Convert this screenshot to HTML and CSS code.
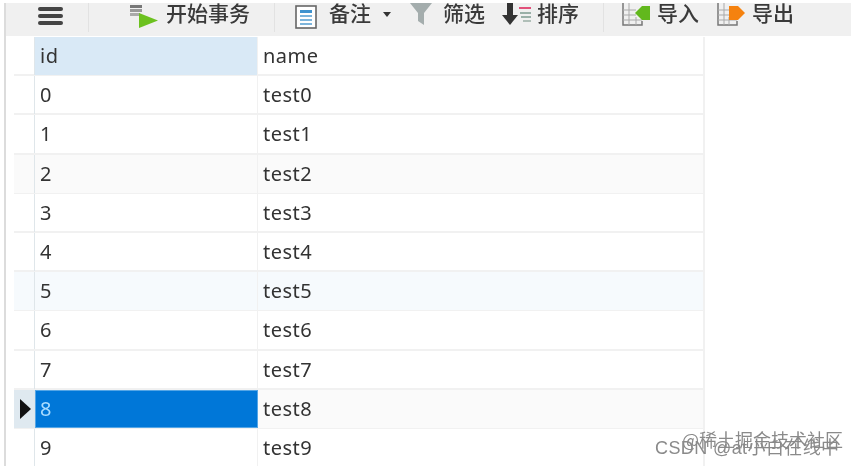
FILE: index.html
```html
<!DOCTYPE html>
<html lang="zh">
<head>
<meta charset="utf-8">
<title>Table</title>
<link rel="stylesheet" href="styles.css">
</head>
<body>
<div class="app">
  <div class="frame">
    <div class="toolbar">
      <div class="menu"><span></span><span></span><span></span></div>
      <div class="sep sep-a"></div>
      <div class="tool t-begin">
        <svg width="28" height="23" viewBox="0 0 28 23"><rect x="0" y="0" width="12" height="3" fill="#777"/><rect x="0" y="4" width="12" height="3" fill="#999"/><rect x="0" y="8" width="10" height="3" fill="#aaa"/><path d="M9 8 L28 15.500 L9 23 Z" fill="#6cc11f"/></svg>
        <span>开始事务</span>
      </div>
      <div class="sep sep-b"></div>
      <div class="tool t-note">
        <svg class="ic-note" width="22" height="24" viewBox="0 0 22 24"><rect x="1" y="1" width="20" height="22" fill="#fff" stroke="#666" stroke-width="1.600"/><rect x="5" y="5" width="12" height="3" fill="#3f93cf"/><rect x="5" y="10" width="12" height="2" fill="#7db5dc"/><rect x="5" y="14" width="12" height="2" fill="#7db5dc"/><rect x="5" y="18" width="12" height="2" fill="#7db5dc"/></svg>
        <span>备注</span>
        <i class="caret"></i>
      </div>
      <div class="tool t-filter">
        <svg width="22" height="22" viewBox="0 0 22 22"><path d="M0 0 H22 L14 10 V22 L8 18 V10 Z" fill="#a4adad"/></svg>
        <span>筛选</span>
      </div>
      <div class="tool t-sort">
        <svg width="30" height="22" viewBox="0 0 30 22"><rect x="5" y="0" width="6" height="14" fill="#333"/><path d="M0 12 H16 L8 22 Z" fill="#333"/><rect x="17" y="4" width="12" height="2" fill="#e2517b"/><rect x="18" y="9" width="11" height="2" fill="#9ab0a8"/><rect x="19" y="13" width="10" height="2" fill="#9ab0a8"/><rect x="21" y="17" width="8" height="2" fill="#b0bfb8"/></svg>
        <span>排序</span>
      </div>
      <div class="sep sep-c"></div>
      <div class="tool t-import">
        <svg width="28" height="23" viewBox="0 0 28 23"><path d="M1 0 V22 H20 V18" fill="none" stroke="#777" stroke-width="1.500"/><path d="M1 7 H14 M1 12 H14 M1 17 H20 M7 0 V22 M14 14 V22" stroke="#aaa" stroke-width="1"/><path d="M13 10 L20 3 H28 V17 H20 Z" fill="#62b81d"/></svg>
        <span>导入</span>
      </div>
      <div class="tool t-export">
        <svg width="28" height="23" viewBox="0 0 28 23"><path d="M1 0 V22 H20 V18" fill="none" stroke="#777" stroke-width="1.500"/><path d="M1 7 H12 M1 12 H12 M1 17 H20 M7 0 V22 M12 14 V22" stroke="#aaa" stroke-width="1"/><path d="M28 10 L21 3 H12 V17 H21 Z" fill="#f5820f"/></svg>
        <span>导出</span>
      </div>
    </div>
    <div class="grid">
      <div class="row head"><div class="gut"></div><div class="cell id sel-col">id</div><div class="cell">name</div></div>
      <div class="row"><div class="gut"></div><div class="cell id">0</div><div class="cell">test0</div></div>
      <div class="row"><div class="gut"></div><div class="cell id">1</div><div class="cell">test1</div></div>
      <div class="row alt"><div class="gut"></div><div class="cell id">2</div><div class="cell">test2</div></div>
      <div class="row"><div class="gut"></div><div class="cell id">3</div><div class="cell">test3</div></div>
      <div class="row"><div class="gut"></div><div class="cell id">4</div><div class="cell">test4</div></div>
      <div class="row tint"><div class="gut"></div><div class="cell id">5</div><div class="cell">test5</div></div>
      <div class="row"><div class="gut"></div><div class="cell id">6</div><div class="cell">test6</div></div>
      <div class="row"><div class="gut"></div><div class="cell id">7</div><div class="cell">test7</div></div>
      <div class="row alt current"><div class="gut"><i class="pointer"></i></div><div class="cell id selected">8</div><div class="cell">test8</div></div>
      <div class="row"><div class="gut"></div><div class="cell id">9</div><div class="cell">test9</div></div>
    </div>
  </div>
  <div class="mark mark-a">@稀土掘金技术社区</div>
  <div class="mark mark-b">CSDN @at小白在线中</div>
</div>
</body>
</html>
```
FILE: styles.css
```css
* { box-sizing: border-box; }
html, body { margin: 0; height: 100%; background: #fff; overflow: hidden; }
.app {
  position: relative;
  width: 857px;
  height: 466px;
  padding: 3px 6px 0 4px;
  overflow: hidden;
  font-family: "Noto Sans CJK SC", "Noto Sans", sans-serif;
  color: #333;
  filter: blur(0.6px);
}
.frame { height: 463px; border-left: 2px solid #dcdcdc; }
.toolbar {
  height: 33px;
  background: #f0f0f0;
  display: flex;
  align-items: flex-start;
  font-family: "Liberation Sans", "Noto Sans CJK SC", sans-serif;
  font-size: 21px;
  line-height: 22px;
  font-weight: 500;
  color: #3a3a3a;
}
.menu { display: flex; flex-direction: column; gap: 3px; width: 25px; margin: 4px 0 0 32px; }
.menu span { display: block; height: 4px; border-radius: 2px; background: #444; }
.sep { width: 1px; height: 29px; background: #e2e2e2; }
.sep-a { margin-left: 25px; }
.tool { display: flex; align-items: flex-start; white-space: nowrap; }
.t-begin { margin-left: 41px; gap: 8px; }
.t-begin svg { margin-top: 2px; }
.sep-b { margin-left: 24px; }
.t-note { margin-left: 20px; gap: 12px; }
.ic-note { margin-top: 2px; }
.caret { width: 0; height: 0; margin: 9px 0 0 0; border: 4px solid transparent; border-top: 5px solid #333; border-bottom: 0; }
.t-filter { margin-left: 19px; gap: 11px; }
.t-sort { margin-left: 17px; gap: 5px; }
.sep-c { margin-left: 24px; }
.t-import { margin-left: 18px; gap: 7px; }
.t-export { margin-left: 18px; gap: 7px; }
.grid { margin: 1px 0 0 8px; width: 691px; }
.row {
  display: grid;
  grid-template-columns: 21px 223px 447px;
  height: 39.2px;
  border-bottom: 2px solid #f1f1f1;
  font-size: 20px;
  line-height: 38px;
}
.gut { position: relative; border-right: 1px solid #dfe6ea; }
.cell { padding-left: 5px; border-right: 2px solid #f1f1f1; font-family: "Noto Sans", sans-serif; letter-spacing: 0.5px; }
.cell.id { border-right-width: 1px; }
.sel-col { background: #d9e9f6; }
.alt .cell, .alt .gut { background: #fafafa; }
.tint .cell, .tint .gut { background: #f6fafd; }
.current .gut { background: #dfe9f0; }
.current .cell.selected { background: #0077d8; color: #a9dcff; border: 1px solid #55a6e6; line-height: 36px; padding-left: 4px; }
.pointer { position: absolute; left: 6px; top: 9px; width: 0; height: 0; border: 10px solid transparent; border-left: 11px solid #111; border-right: 0; }
.mark { position: absolute; white-space: nowrap; color: #8a8a8a; font-size: 18px; line-height: 22px; }
.mark-a { left: 682px; top: 428px; }
.mark-b { left: 655px; top: 437px; font-family: "Liberation Sans", "Noto Sans CJK SC", sans-serif; letter-spacing: 0.4px; }
```
